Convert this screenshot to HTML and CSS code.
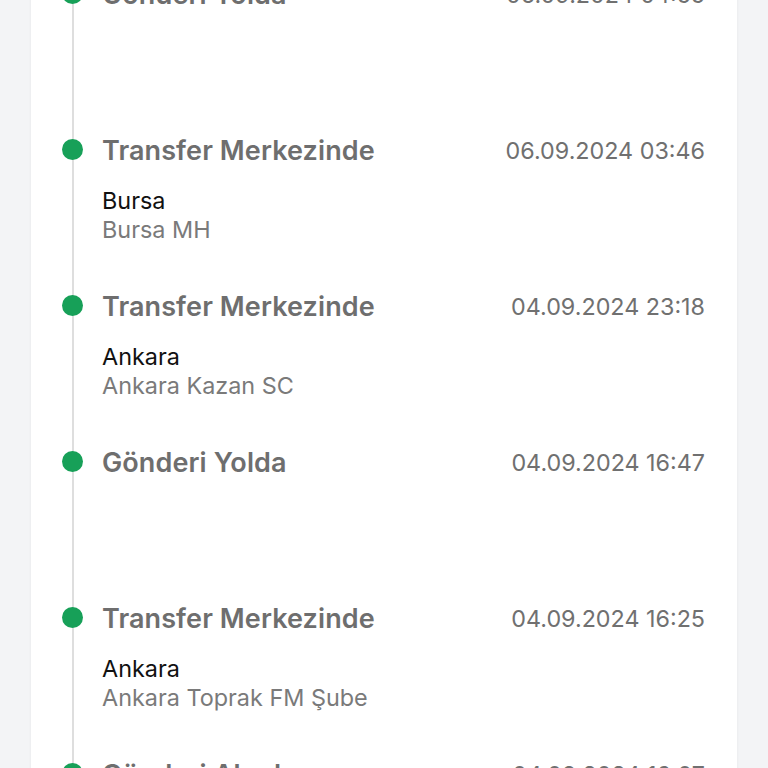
FILE: index.html
```html
<!DOCTYPE html>
<html lang="tr">
<head>
  <meta charset="UTF-8" />
  <meta name="viewport" content="width=device-width, initial-scale=1.0" />
  <title>Gönderi Takip</title>
  <link rel="stylesheet" href="styles.css">
</head>
<body>
  <div class="card">
    <ul class="timeline">
      <li class="step">
        <span class="dot"></span>
        <div class="step-head">
          <span class="step-title">Gönderi Yolda</span>
          <span class="step-date">06.09.2024 04:55</span>
        </div>
      </li>
      <li class="step">
        <span class="dot"></span>
        <div class="step-head">
          <span class="step-title">Transfer Merkezinde</span>
          <span class="step-date">06.09.2024 03:46</span>
        </div>
        <div class="step-city">Bursa</div>
        <div class="step-branch">Bursa MH</div>
      </li>
      <li class="step">
        <span class="dot"></span>
        <div class="step-head">
          <span class="step-title">Transfer Merkezinde</span>
          <span class="step-date">04.09.2024 23:18</span>
        </div>
        <div class="step-city">Ankara</div>
        <div class="step-branch">Ankara Kazan SC</div>
      </li>
      <li class="step">
        <span class="dot"></span>
        <div class="step-head">
          <span class="step-title">Gönderi Yolda</span>
          <span class="step-date">04.09.2024 16:47</span>
        </div>
      </li>
      <li class="step">
        <span class="dot"></span>
        <div class="step-head">
          <span class="step-title">Transfer Merkezinde</span>
          <span class="step-date">04.09.2024 16:25</span>
        </div>
        <div class="step-city">Ankara</div>
        <div class="step-branch">Ankara Toprak FM Şube</div>
      </li>
      <li class="step">
        <span class="dot"></span>
        <div class="step-head">
          <span class="step-title">Gönderi Alındı</span>
          <span class="step-date">04.09.2024 16:07</span>
        </div>
      </li>
    </ul>
  </div>
</body>
</html>
```

FILE: styles.css
```css
* {
  box-sizing: border-box;
  margin: 0;
  padding: 0;
  font-family: 'Inter', 'Noto Sans', sans-serif;
}
body {
  background: #f3f4f6;
  padding: 0 31px;
  overflow: hidden;
}
.card {
  background: #fff;
  margin-top: -22px;
  padding: 0 32px 0 41px;
  box-shadow: 0 0 3px rgba(0, 0, 0, 0.06);
  min-height: 900px;
}
.timeline {
  list-style: none;
  border-left: 2px solid #dedede;
}
.step {
  position: relative;
  height: 156px;
  padding-left: 28px;
}
.dot {
  position: absolute;
  left: -12px;
  top: 5px;
  width: 21px;
  height: 21px;
  border-radius: 50%;
  background: #17a058;
}
.step-head {
  display: flex;
  justify-content: space-between;
  align-items: center;
  height: 32px;
  margin-bottom: 20px;
}
.step-title {
  font-size: 27px;
  font-weight: 600;
  letter-spacing: 0.1px;
  color: #6e6e6e;
}
.step-date {
  font-size: 23.3px;
  color: #707070;
}
.step-city {
  font-size: 23.4px;
  line-height: 29px;
  color: #111;
}
.step-branch {
  font-size: 23.4px;
  line-height: 29px;
  color: #7a7a7a;
}
```
